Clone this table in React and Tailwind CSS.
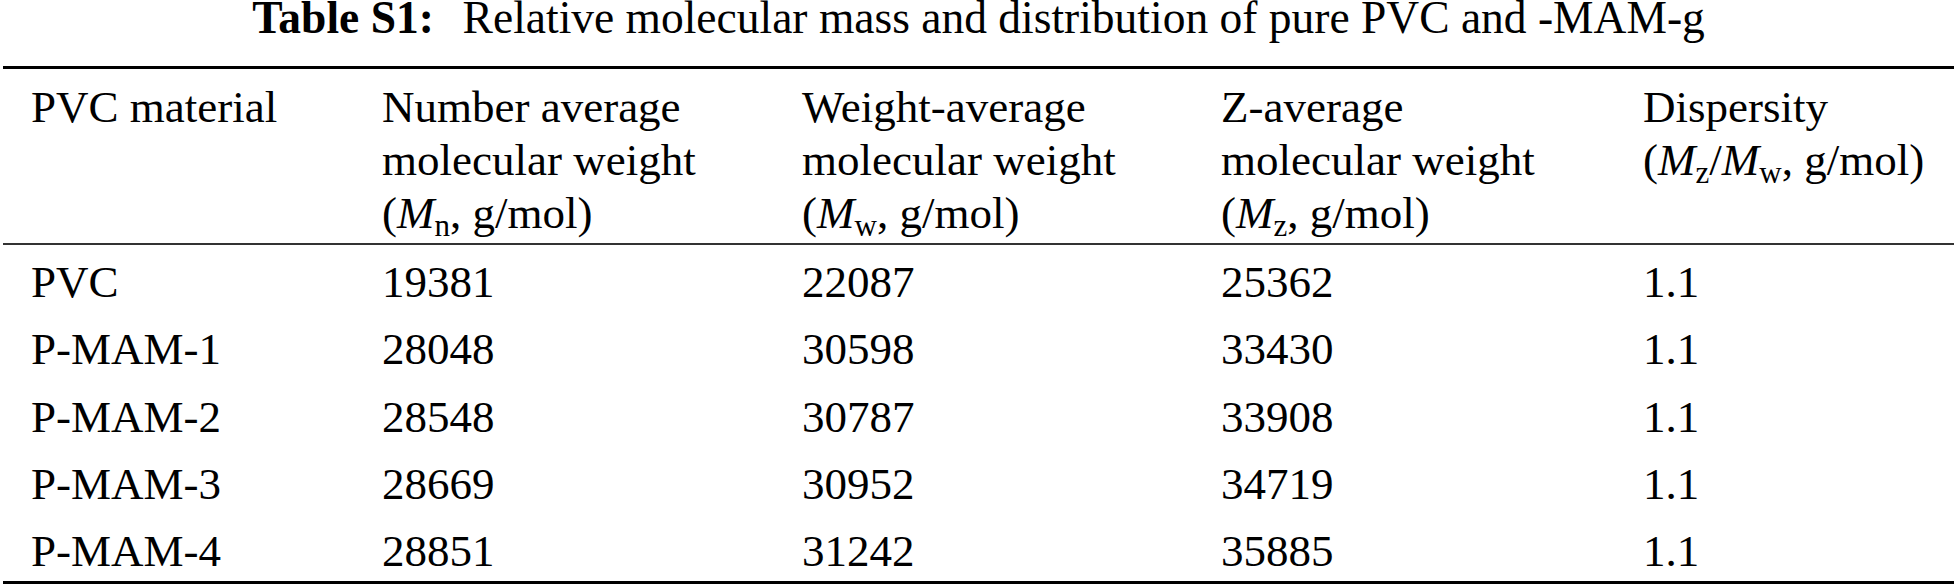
import React from "react";

const rows = [
  ["PVC", "19381", "22087", "25362", "1.1"],
  ["P-MAM-1", "28048", "30598", "33430", "1.1"],
  ["P-MAM-2", "28548", "30787", "33908", "1.1"],
  ["P-MAM-3", "28669", "30952", "34719", "1.1"],
  ["P-MAM-4", "28851", "31242", "35885", "1.1"],
];

function M({ s }) {
  return (
    <span>
      <i>M</i>
      <sub className="text-[31px]">{s}</sub>
    </span>
  );
}

export default function App() {
  return (
    <div className="w-[1957px] h-[586px] bg-white text-black font-['Liberation_Serif','Times_New_Roman',serif] text-[45px] overflow-hidden">
      <div className="h-[36px] leading-[36px] text-center whitespace-pre text-[45.5px]">
        <b>Table S1:</b>
        <span className="pl-[6px]">
          {"  Relative molecular mass and distribution of pure PVC and -MAM-g"}
        </span>
      </div>
      <div className="mx-[3px] mt-[30px] border-t-[3px] border-black">
        <div className="grid grid-cols-[351px_420px_419px_422px_1fr] pl-[28px] pt-[12px] pb-[3px] leading-[53px] border-b-2 border-[#333]">
          <div>PVC material</div>
          <div>
            Number average
            <br />
            molecular weight
            <br />
            (<M s="n" />, g/mol)
          </div>
          <div>
            Weight-average
            <br />
            molecular weight
            <br />
            (<M s="w" />, g/mol)
          </div>
          <div>
            Z-average
            <br />
            molecular weight
            <br />
            (<M s="z" />, g/mol)
          </div>
          <div>
            Dispersity
            <br />
            (<M s="z" />/<M s="w" />, g/mol)
          </div>
        </div>
        <div className="border-b-[3px] border-black">
          {rows.map((r) => (
            <div
              key={r[0]}
              className="grid grid-cols-[351px_420px_419px_422px_1fr] pl-[28px] pt-[7px] leading-[60.25px]"
            >
              {r.map((c, i) => (
                <div key={i}>{c}</div>
              ))}
            </div>
          ))}
        </div>
      </div>
    </div>
  );
}
